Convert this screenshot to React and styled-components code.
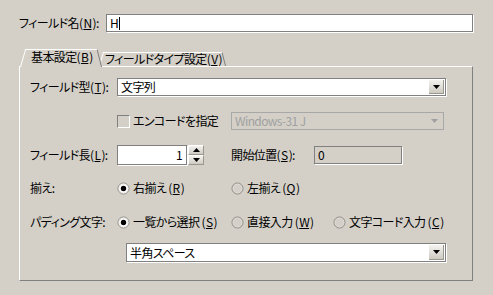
import React from "react";
import styled, { createGlobalStyle } from "styled-components";

const Global = createGlobalStyle`
  html, body { margin: 0; padding: 0; background: #d4d0c8; }
  body {
    font-family: "Noto Sans CJK JP", "Liberation Sans", sans-serif;
    font-size: 12px;
    color: #000;
    font-feature-settings: "palt";
    letter-spacing: -0.6px;
  }
`;

const Page = styled.div`
  width: 493px;
  height: 295px;
  box-sizing: border-box;
  padding: 14px 0 0 19px;
`;

const Row = styled.div`
  display: flex;
  align-items: center;
  height: ${(p) => p.h || 18}px;
  margin-top: ${(p) => p.mt || 0}px;
`;

const Label = styled.div`
  width: ${(p) => p.w}px;
  flex: none;
  white-space: nowrap;
  line-height: 14px;
`;

const U = styled.span`
  text-decoration: underline;
  text-underline-offset: 1px;
  padding: 0 1px;
`;

const TextInput = styled.div`
  width: ${(p) => p.w}px;
  height: ${(p) => p.h || 18}px;
  box-sizing: border-box;
  border: 1px solid #808080;
  box-shadow: 1px 1px 0 #fff;
  background: ${(p) => (p.readonly ? "#d4d0c8" : "#fff")};
  display: flex;
  align-items: center;
  justify-content: ${(p) => (p.right ? "flex-end" : "flex-start")};
  padding: 0 ${(p) => (p.right ? 4 : 3)}px;
  flex: none;
  line-height: 14px;
`;

const Caret = styled.span`
  display: inline-block;
  width: 1px;
  height: 13px;
  background: #000;
  margin-left: 1px;
`;

const Combo = styled.div`
  width: ${(p) => p.w}px;
  height: ${(p) => p.h || 18}px;
  box-sizing: border-box;
  border: 1px solid ${(p) => (p.disabled ? "#a8a8a8" : "#808080")};
  box-shadow: ${(p) => (p.disabled ? "none" : "1px 1px 0 #fff")};
  background: ${(p) => (p.disabled ? "transparent" : "#fff")};
  color: ${(p) => (p.disabled ? "#a0a0a0" : "#000")};
  display: flex;
  align-items: stretch;
  padding: 1px;
  flex: none;
`;

const ComboText = styled.div`
  flex: 1;
  display: flex;
  align-items: center;
  padding-left: 2px;
  line-height: 14px;
  white-space: nowrap;
`;

const DropButton = styled.div`
  width: 15px;
  flex: none;
  display: flex;
  align-items: center;
  justify-content: center;
  box-sizing: border-box;
  background: ${(p) =>
    p.disabled ? "transparent" : "linear-gradient(#f4f3ef, #cdcac2)"};
  border-right: 1px solid ${(p) => (p.disabled ? "transparent" : "#9a978f")};
  border-bottom: 1px solid ${(p) => (p.disabled ? "transparent" : "#9a978f")};
`;

const Arrow = ({ color = "#000", up }) => (
  <svg width="7" height="4" viewBox="0 0 7 4">
    <polygon
      points={up ? "3.5,0 7,4 0,4" : "0,0 7,0 3.5,4"}
      fill={color}
    />
  </svg>
);

const SpinWrap = styled.div`
  width: ${(p) => p.w}px;
  height: 20px;
  display: flex;
  flex: none;
`;

const SpinButtons = styled.div`
  width: 16px;
  display: flex;
  flex-direction: column;
  margin-left: 1px;
`;

const SpinButton = styled.div`
  flex: 1;
  display: flex;
  align-items: center;
  justify-content: center;
  background: linear-gradient(#f4f3ef, #cdcac2);
  border-right: 1px solid #9a978f;
  border-bottom: 1px solid #9a978f;
  border-top: 1px solid #fff;
  border-left: 1px solid #fff;
  box-sizing: border-box;
`;

const Cell = styled.div`
  width: ${(p) => p.w}px;
  flex: none;
  display: flex;
  align-items: center;
  white-space: nowrap;
  line-height: 14px;
`;

const CheckBox = styled.span`
  width: 13px;
  height: 13px;
  box-sizing: border-box;
  border-top: 1px solid #808080;
  border-left: 1px solid #808080;
  border-right: 1px solid #fff;
  border-bottom: 1px solid #fff;
  background: #d4d0c8;
  margin-right: 3px;
  flex: none;
`;

const RadioIcon = ({ checked }) => (
  <svg width="13" height="13" viewBox="0 0 13 13" style={{ flex: "none", marginRight: 3 }}>
    <circle cx="6.5" cy="6.5" r="5.5" fill={checked ? "#fff" : "#d4d0c8"} stroke="#8c8a84" strokeWidth="1" />
    <circle cx="6.5" cy="6.5" r="4.4" fill="none" stroke={checked ? "#e8e6e0" : "#e0ded8"} strokeWidth="0.8" />
    {checked && <circle cx="6.5" cy="6.5" r="2.7" fill="#000" />}
  </svg>
);

const Radio = ({ w, checked, children }) => (
  <Cell w={w}>
    <RadioIcon checked={checked} />
    <span>{children}</span>
  </Cell>
);

const TabBar = styled.div`
  display: flex;
  align-items: flex-end;
  height: 17px;
  margin-top: 17px;
  padding-left: 1px;
  position: relative;
  z-index: 2;
`;

const Tab = styled.div`
  position: relative;
  isolation: isolate;
  box-sizing: border-box;
  width: ${(p) => p.w}px;
  height: ${(p) => (p.active ? 18 : 14)}px;
  margin-bottom: ${(p) => (p.active ? -1 : 0)}px;
  margin-left: ${(p) => p.ml || 0}px;
  padding-left: ${(p) => p.pl}px;
  padding-top: ${(p) => (p.active ? 1 : 0)}px;
  z-index: ${(p) => (p.active ? 2 : 1)};
  white-space: nowrap;
  line-height: 14px;
  &::before,
  &::after {
    content: "";
    position: absolute;
    top: 0;
    bottom: 0;
    width: 60%;
    background: #d4d0c8;
    border-top: 1px solid #fff;
    z-index: -1;
  }
  &::before {
    left: 0;
    border-left: 1px solid #fff;
    transform: skewX(-16deg);
    transform-origin: bottom left;
  }
  &::after {
    right: 0;
    border-right: 1px solid #808080;
    transform: skewX(14deg);
    transform-origin: bottom right;
  }
`;

const Panel = styled.div`
  width: 454px;
  height: 215px;
  box-sizing: border-box;
  border-top: 1px solid #fff;
  border-left: 1px solid #fff;
  border-right: 1px solid #808080;
  border-bottom: 1px solid #808080;
  padding: 11px 0 0 10px;
  position: relative;
  z-index: 1;
`;

export default function App() {
  return (
    <>
      <Global />
      <Page>
        <Row>
          <Label w={87}>
            フィールド名(<U>N</U>):
          </Label>
          <TextInput w={367}>
            H<Caret />
          </TextInput>
        </Row>

        <TabBar>
          <Tab active w={82} pl={11}>
            基本設定(<U>B</U>)
          </Tab>
          <Tab w={127} ml={-3} pl={6}>
            フィールドタイプ設定(<U>V</U>)
          </Tab>
        </TabBar>

        <Panel>
          <Row>
            <Label w={87}>
              フィールド型(<U>T</U>):
            </Label>
            <Combo w={329}>
              <ComboText>文字列</ComboText>
              <DropButton>
                <Arrow />
              </DropButton>
            </Combo>
          </Row>

          <Row mt={16}>
            <Label w={87} />
            <Cell w={114}>
              <CheckBox />
              <span>エンコードを指定</span>
            </Cell>
            <Combo w={213} disabled>
              <ComboText>Windows-31 J</ComboText>
              <DropButton disabled>
                <Arrow color="#a0a0a0" />
              </DropButton>
            </Combo>
          </Row>

          <Row mt={15} h={20}>
            <Label w={87}>
              フィールド長(<U>L</U>):
            </Label>
            <SpinWrap w={87}>
              <TextInput w={70} h={20} right>
                1
              </TextInput>
              <SpinButtons>
                <SpinButton>
                  <Arrow up />
                </SpinButton>
                <SpinButton>
                  <Arrow />
                </SpinButton>
              </SpinButtons>
            </SpinWrap>
            <Cell w={27} />
            <Label w={83}>
              開始位置(<U>S</U>):
            </Label>
            <TextInput w={88} readonly>
              0
            </TextInput>
          </Row>

          <Row mt={14}>
            <Label w={87}>揃え:</Label>
            <Radio w={114} checked>
              右揃え (<U>R</U>)
            </Radio>
            <Radio w={102}>
              左揃え (<U>Q</U>)
            </Radio>
          </Row>

          <Row mt={16}>
            <Label w={87}>パディング文字:</Label>
            <Radio w={114} checked>
              一覧から選択 (<U>S</U>)
            </Radio>
            <Radio w={102}>
              直接入力 (<U>W</U>)
            </Radio>
            <Radio w={120}>
              文字コード入力 (<U>C</U>)
            </Radio>
          </Row>

          <Row mt={12} h={19}>
            <Label w={96} />
            <Combo w={320} h={19}>
              <ComboText>半角スペース</ComboText>
              <DropButton>
                <Arrow />
              </DropButton>
            </Combo>
          </Row>
        </Panel>
      </Page>
    </>
  );
}
